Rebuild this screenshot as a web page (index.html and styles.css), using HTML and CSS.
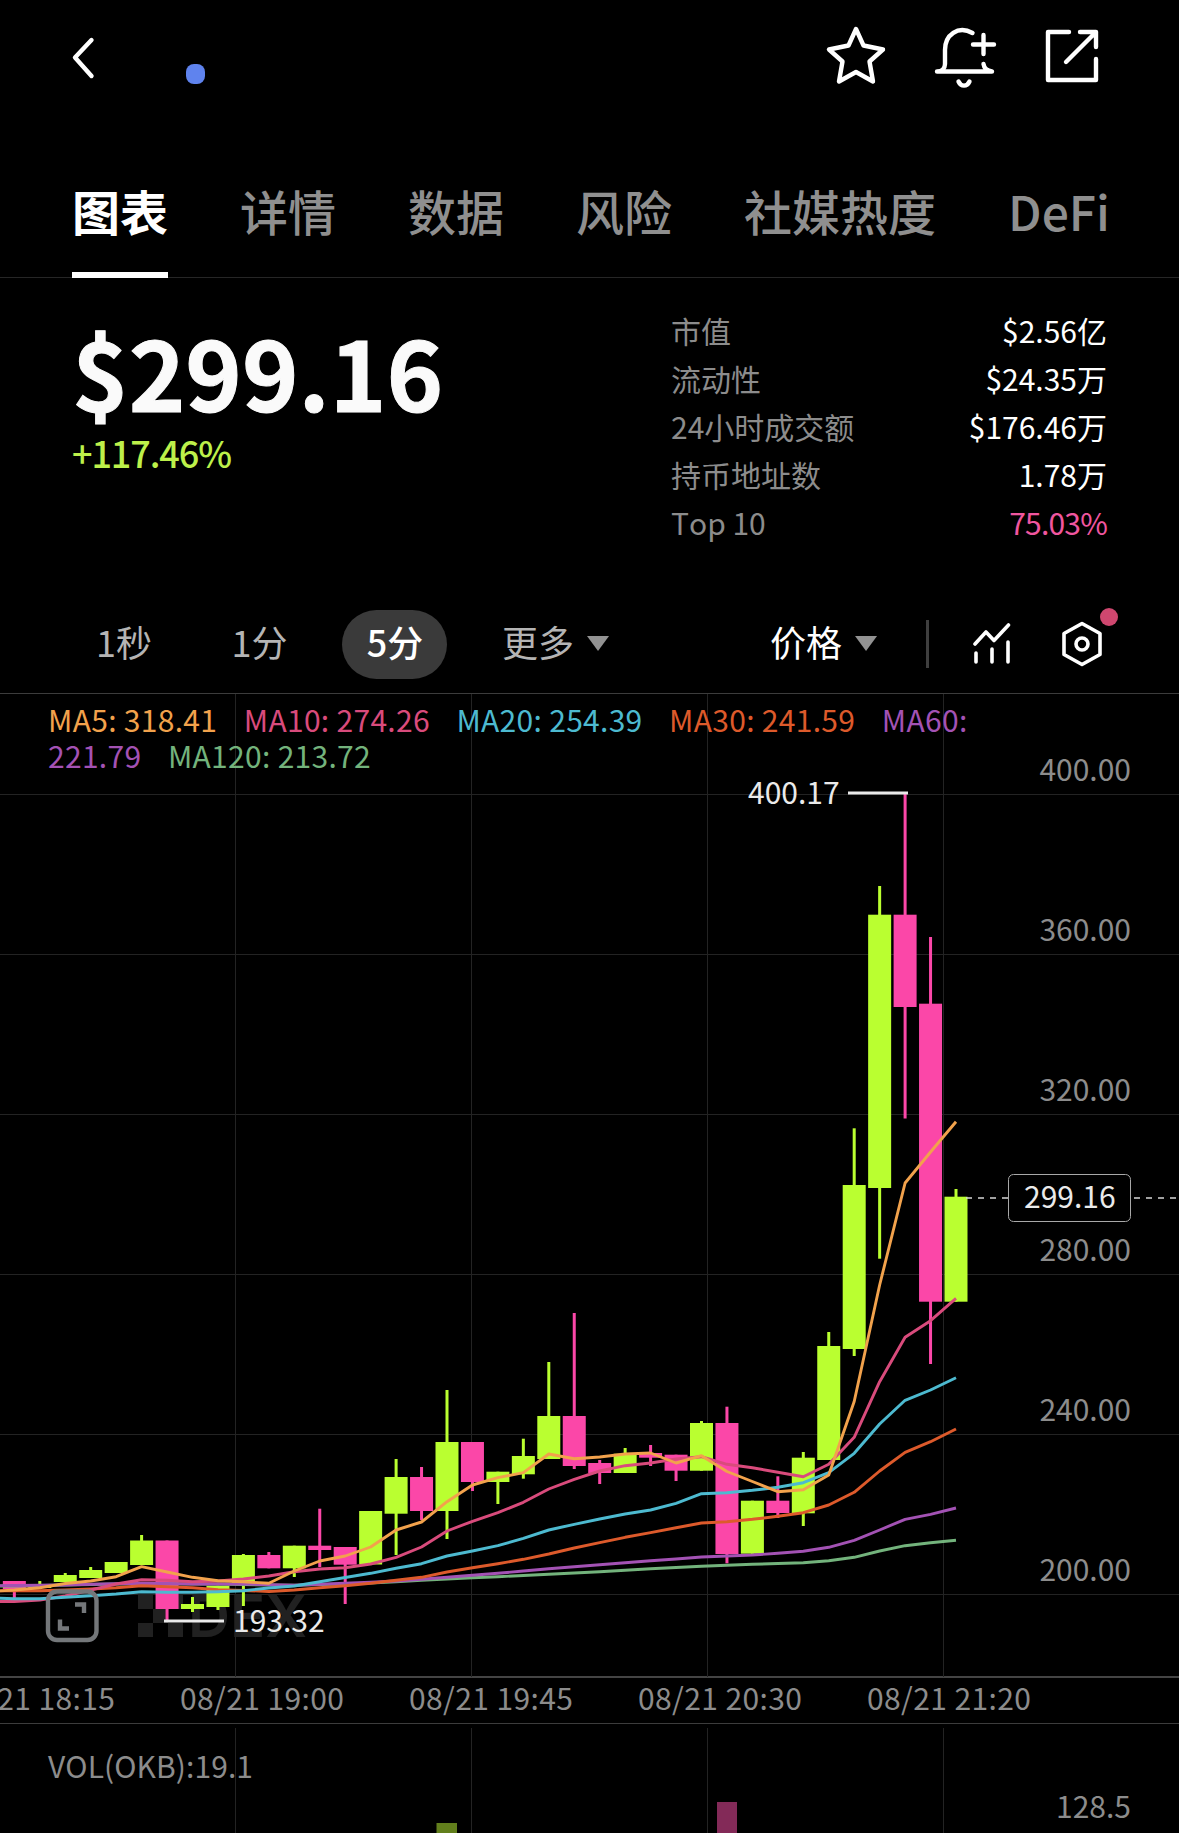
FILE: index.html
```html
<!DOCTYPE html>
<html lang="zh-CN">
<head>
    <meta charset="UTF-8">
    <meta name="viewport" content="width=device-width, initial-scale=1.0">
    <title>OKB</title>
    <link rel="stylesheet" href="styles.css">
</head>
<body>
    <header class="header">
        <svg class="back" width="26" height="44" viewBox="0 0 26 44"><path d="M20.500 4 L4 21.500 L20.500 40"/></svg>
        <span class="token-dot"></span>
        <div class="header-actions">
            <svg class="star" width="62" height="62" viewBox="0 0 62 62"><path d="M31 5 L38.500 21.500 L58 25.500 L44.500 37.500 L48 57.500 L31 48 L14 57.500 L17.500 37.500 L4 25.500 L23.500 21.500 Z"/></svg>
            <svg width="66" height="66" viewBox="0 0 66 66"><path d="M39.500 9 C25 1 12 11 12 26 V40 C12 44 9 47.500 4 47.500 H59 C53 46.500 51 44 50.500 40 M50.500 11 V30 M40 20.500 H61 M25.500 57.500 C28 63 34 63 36.500 57.500"/></svg>
            <svg width="58" height="58" viewBox="0 0 58 58"><path d="M26 5 H5 V53 H53 V32 M37 5 H53 V20 M53 5 L23 35"/></svg>
        </div>
    </header>

    <nav class="tabs">
        <div class="tab active">图表</div>
        <div class="tab">详情</div>
        <div class="tab">数据</div>
        <div class="tab">风险</div>
        <div class="tab">社媒热度</div>
        <div class="tab">DeFi</div>
    </nav>

    <section class="overview">
        <div>
            <div class="price">$299.16</div>
            <div class="change">+117.46%</div>
        </div>
        <div class="stats">
            <div class="stat"><span>市值</span><b>$2.56亿</b></div>
            <div class="stat"><span>流动性</span><b>$24.35万</b></div>
            <div class="stat"><span>24小时成交额</span><b>$176.46万</b></div>
            <div class="stat"><span>持币地址数</span><b>1.78万</b></div>
            <div class="stat"><span>Top 10</span><b class="risk">75.03%</b></div>
        </div>
    </section>

    <div class="toolbar">
        <div class="interval">1秒</div>
        <div class="interval">1分</div>
        <div class="interval active">5分</div>
        <div class="dropdown more">更多<i class="caret"></i></div>
        <div class="dropdown type">价格<i class="caret"></i></div>
        <span class="divider"></span>
        <svg class="tool-icon" width="40" height="44" viewBox="0 0 40 44"><path d="M4 22 L15 10 L23 18.500 L37.500 3 M5 31 V40 M21 27 V40 M37 20 V40"/></svg>
        <div class="settings">
            <svg class="tool-icon" width="44" height="48" viewBox="0 0 44 48"><path d="M22 3.500 L40 13.500 V34.500 L22 44.500 L4 34.500 V13.500 Z"/><circle cx="22" cy="24" r="6"/></svg>
            <span class="badge"></span>
        </div>
    </div>

    <div class="chart">
        <div class="legend">
            <span class="ma5">MA5: 318.41</span>
            <span class="ma10">MA10: 274.26</span>
            <span class="ma20">MA20: 254.39</span>
            <span class="ma30">MA30: 241.59</span>
            <span class="ma60">MA60: 221.79</span>
            <span class="ma120">MA120: 213.72</span>
        </div>
        <svg width="1179" height="983" viewBox="0 694 1179 983">
            <g id="grid" class="grid"></g>
            <g class="watermark">
                <path d="M138 1595h15v14h-15z M168 1595h15v14h-15z M153 1609h15v14h-15z M138 1623h15v14h-15z M168 1623h15v14h-15z"/>
                <text x="188" y="1637" textLength="119" lengthAdjust="spacingAndGlyphs">DEX</text>
            </g>
            <g id="candles"></g>
            <g id="lines" class="lines"></g>
            <g id="scale" class="scale"></g>
            <g class="marker">
                <path d="M848 793 H908 M164 1621 H224"/>
                <text x="748" y="804">400.17</text>
                <text x="233" y="1632">193.32</text>
            </g>
            <g class="last">
                <path d="M966 1198 H1179"/>
                <rect x="1008.500" y="1174.500" width="122" height="47" rx="5"/>
                <text x="1024" y="1208">299.16</text>
            </g>
            <g class="expand">
                <rect x="48" y="1591.500" width="48.500" height="48.500" rx="9"/>
                <path d="M75 1604.500 H84 V1613 M60 1619.500 V1628.500 H69"/>
            </g>
        </svg>
    </div>

    <div class="time-axis">
        <span>08/21 18:15</span>
        <span>08/21 19:00</span>
        <span>08/21 19:45</span>
        <span>08/21 20:30</span>
        <span>08/21 21:20</span>
    </div>

    <div class="volume">
        <svg width="1179" height="109" viewBox="0 1724 1179 109">
            <path class="grid" d="M235.500 1728 V1833 M471.500 1728 V1833 M707.500 1728 V1833 M943.500 1728 V1833"/>
            <rect class="vol-up" x="436.500" y="1823" width="20.500" height="10"/>
            <rect class="vol-down" x="717" y="1802" width="20" height="31"/>
            <g class="scale">
                <text x="48" y="1778" textLength="205">VOL(OKB):19.1</text>
                <text x="1131" y="1818" text-anchor="end">128.5</text>
            </g>
        </svg>
    </div>

    <script src="chart.js"></script>
</body>
</html>
```

FILE: styles.css
```css
body {
    margin: 0;
    width: 1179px;
    height: 1833px;
    overflow: hidden;
    background: #000;
    color: #fff;
    font-family: "Noto Sans CJK SC", sans-serif;
    font-size: 30px;
    font-kerning: none;
}

svg {
    display: block;
    flex: none;
}

.header {
    display: flex;
    height: 172px;
    box-sizing: border-box;
    padding: 0 78px 0 71px;
}

.header path {
    fill: none;
    stroke: #fff;
    stroke-width: 4.4;
    stroke-linecap: round;
    stroke-linejoin: round;
}

.back {
    margin-top: 36px;
}

.token-dot {
    width: 19px;
    height: 20px;
    margin: 64px 0 0 89px;
    border-radius: 8px;
    background: #5f83ee;
}

.header-actions {
    display: flex;
    gap: 44px;
    margin: 24px 0 0 auto;
}

.header-actions .star {
    margin-right: 2px;
}

.header-actions svg + svg + svg {
    margin-top: 3px;
}

.tabs {
    display: flex;
    gap: 72px;
    padding-left: 72px;
    border-bottom: 1px solid #262626;
}

.tab {
    line-height: 72px;
    padding: 2px 0 26px;
    margin-bottom: -1px;
    border-bottom: 6px solid transparent;
    font-size: 48px;
    font-weight: 500;
    color: #8f8f8f;
    white-space: nowrap;
}

.tab.active {
    color: #fff;
    font-weight: 700;
    border-color: #fff;
}

.overview {
    display: flex;
    justify-content: space-between;
    height: 317px;
    box-sizing: border-box;
    padding: 28px 72px 0;
}

.price {
    margin-top: 15px;
    line-height: 100px;
    font-size: 96px;
    font-weight: 700;
    color: #fafafa;
    -webkit-text-stroke: 1px #fafafa;
}

.change {
    margin-top: 11px;
    line-height: 40px;
    font-size: 36px;
    font-weight: 500;
    letter-spacing: -1.1px;
    color: #bdf04a;
}

.stats {
    width: 436px;
}

.stat {
    display: flex;
    justify-content: space-between;
    line-height: 48px;
    color: #8c8c8c;
}

.stat b {
    font-weight: 400;
    color: #fff;
}

.stat .risk {
    color: #f0569f;
    letter-spacing: -0.8px;
}

.toolbar {
    display: flex;
    align-items: center;
    height: 99px;
    box-sizing: border-box;
    padding-left: 71px;
    border-bottom: 1px solid #3c3c3c;
    font-size: 36px;
}

.interval {
    width: 105px;
    height: 69px;
    box-sizing: border-box;
    margin-right: 30.5px;
    padding-left: 1px;
    line-height: 63px;
    text-align: center;
    border-radius: 35px;
    color: #b4b4b4;
}

.interval.active {
    background: #3a3a3a;
    color: #fff;
    font-weight: 500;
}

.dropdown {
    display: flex;
    align-items: center;
    height: 69px;
    line-height: 61px;
    padding-bottom: 6px;
    box-sizing: border-box;
}

.more {
    margin-left: 24.5px;
    color: #b4b4b4;
}

.type {
    margin-left: 161px;
}

.caret {
    width: 22px;
    height: 15px;
    margin: 5px 0 0 13px;
    background: #929292;
    clip-path: polygon(0 0, 100% 0, 50% 100%);
}

.divider {
    width: 3px;
    height: 48px;
    margin: 0 42px 0 49px;
    background: #3f3f3f;
}

.tool-icon path,
.tool-icon circle {
    fill: none;
    stroke: #fff;
    stroke-width: 3.6;
    stroke-linecap: round;
    stroke-linejoin: round;
}

.settings {
    position: relative;
    margin-left: 49px;
}

.badge {
    position: absolute;
    top: -12px;
    right: -14px;
    width: 18px;
    height: 18px;
    border-radius: 50%;
    background: #cf476f;
}

.chart {
    position: relative;
}

.legend {
    position: absolute;
    top: 7px;
    left: 48px;
    width: 960px;
    line-height: 36px;
    letter-spacing: 0.3px;
}

.legend span {
    margin-right: 19.5px;
}

.ma5 { color: #f2a24c; stroke: #f2a24c; }
.ma10 { color: #d94b7c; stroke: #d94b7c; }
.ma20 { color: #4dbad0; stroke: #4dbad0; }
.ma30 { color: #dd5a2b; stroke: #dd5a2b; }
.ma60 { color: #a352b4; stroke: #a352b4; }
.ma120 { color: #73b37c; stroke: #73b37c; }

.grid {
    stroke: #232323;
    stroke-width: 1;
}

.watermark {
    fill: #212121;
    font-family: Inter, sans-serif;
    font-size: 58px;
    font-weight: 600;
}

.up { fill: #baff30; }
.down { fill: #fb47a8; }
.vol-up { fill: #627f1c; }
.vol-down { fill: #832a58; }

.lines polyline {
    fill: none;
    stroke-width: 2.9;
    stroke-linejoin: round;
}

.scale {
    fill: #8c8c8c;
}

.marker,
.last text {
    fill: #eaeaea;
}

.marker path {
    stroke: #eaeaea;
    stroke-width: 3;
}

.last path {
    stroke: #d5d5d5;
    stroke-width: 1.3;
    stroke-dasharray: 6 6;
}

.last rect {
    fill: #000;
    stroke: #a8a8a8;
}

.expand rect,
.expand path {
    fill: none;
    stroke: #74777a;
    stroke-width: 4.4;
}

.time-axis {
    display: flex;
    gap: 66px;
    height: 48px;
    box-sizing: border-box;
    margin-top: -1px;
    border-top: 2px solid #444;
    border-bottom: 1px solid #3c3c3c;
    line-height: 39px;
    color: #8c8c8c;
}

.time-axis span {
    width: 163px;
    flex: none;
    white-space: nowrap;
    letter-spacing: 0.4px;
}

.time-axis span:first-child {
    margin-left: -49px;
}
```

FILE: chart.js
```js
const LAST_X = 956;
const STEP = 25.45;
const BODY = 23;

// newest first: [direction, high, top, bottom, low]
const candles = [
    ['up', 1189, 1196.7, 1301.7, 1301.7],
    ['down', 937, 1003.7, 1301.7, 1364],
    ['down', 793, 914.7, 1007, 1118.5],
    ['up', 886, 914.7, 1188, 1258.7],
    ['up', 1128.3, 1185, 1349, 1356],
    ['up', 1332, 1346, 1460, 1460],
    ['up', 1452, 1457.7, 1513.3, 1526],
    ['down', 1476.3, 1500.7, 1513, 1518],
    ['up', 1500.7, 1500.7, 1553.7, 1553.7],
    ['down', 1406.7, 1423, 1554, 1563.3],
    ['up', 1421, 1423, 1470.7, 1470.7],
    ['down', 1454.7, 1454.7, 1470.7, 1481],
    ['down', 1445, 1453, 1457.7, 1466],
    ['up', 1448, 1453.7, 1473, 1473],
    ['down', 1460, 1463, 1473, 1484],
    ['down', 1313, 1416, 1466, 1469],
    ['up', 1362, 1416, 1459, 1459],
    ['up', 1438.7, 1456, 1474.3, 1478.7],
    ['up', 1471.7, 1471.7, 1482, 1504],
    ['down', 1442, 1442, 1482, 1491],
    ['up', 1390, 1442, 1511, 1539],
    ['down', 1467, 1477, 1511, 1520],
    ['up', 1459, 1477, 1513.7, 1555],
    ['up', 1511, 1511, 1564.5, 1564.5],
    ['down', 1547, 1547, 1564.7, 1604],
    ['down', 1508.7, 1545.7, 1550, 1567],
    ['up', 1545.7, 1545.7, 1568.3, 1577],
    ['down', 1552, 1555, 1568.3, 1568.3],
    ['up', 1554, 1555, 1585, 1606],
    ['up', 1585.7, 1585.7, 1607, 1610],
    ['up', 1597, 1604, 1609, 1612],
    ['down', 1540.5, 1540.5, 1609, 1620],
    ['up', 1535, 1540.5, 1565, 1565],
    ['up', 1562, 1562, 1573, 1573],
    ['up', 1567, 1570, 1578, 1578],
    ['up', 1573, 1575, 1582, 1582],
    ['up', 1581, 1585, 1588, 1588],
    ['down', 1581, 1581, 1589, 1598]
];

const averages = {
    ma120: [1540.3, 1542.7, 1545.7, 1551, 1557.3, 1560.7, 1562.7, 1563.5, 1564.3, 1565.3, 1566.3, 1567.5, 1568.7, 1570.2, 1571.7, 1573, 1574.3, 1575.5, 1576.7, 1577.8, 1579, 1580.3, 1581.7, 1583, 1584, 1584.6, 1585.3, 1585, 1584.5, 1584, 1584, 1583.7, 1583.7, 1584, 1584.5, 1585, 1585.5, 1586, 1586],
    ma60: [1508, 1514.3, 1519.3, 1530, 1540.3, 1547.3, 1551.3, 1553.3, 1555, 1556, 1557, 1559, 1560.7, 1562.7, 1564.7, 1566.7, 1568.7, 1571, 1573.3, 1575.3, 1577.3, 1579.2, 1581, 1582.2, 1583.3, 1584.3, 1585.3, 1584.7, 1584, 1584, 1584, 1583.5, 1583.3, 1583.8, 1584.3, 1585, 1585.3, 1585.5, 1585.7],
    ma30: [1429, 1441.7, 1452.3, 1471, 1492.3, 1505, 1512.7, 1516.3, 1519.3, 1521.7, 1523, 1527.7, 1532.7, 1537.3, 1542.7, 1548, 1554, 1559.3, 1563.7, 1567.7, 1572, 1577.3, 1580.3, 1583.3, 1585.7, 1587.7, 1590, 1591.5, 1590.5, 1589.7, 1587.7, 1586.7, 1585.7, 1587.7, 1589, 1590, 1590.7, 1590.7, 1591],
    ma10: [1298.3, 1320.7, 1337.3, 1381.7, 1437.3, 1464.3, 1476.7, 1472.3, 1467.7, 1464.3, 1456.7, 1459, 1463, 1465.7, 1471, 1479.3, 1489, 1502.3, 1512.7, 1521.3, 1531, 1547, 1557.3, 1564, 1567.7, 1569, 1571.7, 1576, 1579, 1581, 1581.7, 1580.3, 1579.7, 1584, 1590, 1596, 1600, 1601.5, 1601.5],
    ma20: [1377.7, 1390, 1400.3, 1424, 1453.3, 1472.7, 1482.7, 1487.3, 1490.3, 1492.7, 1493.7, 1503.3, 1510, 1514, 1519, 1524.3, 1530, 1538.3, 1545.7, 1551, 1556, 1563.7, 1568.3, 1573.3, 1577.5, 1581.7, 1586, 1588, 1590.7, 1591.7, 1592.3, 1592.3, 1591.7, 1594, 1595.7, 1597.3, 1598.7, 1598.7, 1598],
    ma5: [1121.7, 1152, 1183, 1285, 1401.5, 1475, 1489.7, 1491.7, 1481.5, 1471.5, 1455.7, 1463, 1453, 1454, 1457, 1458.7, 1454, 1472.7, 1477.7, 1485, 1501.7, 1522, 1530, 1547, 1556, 1561, 1571, 1583.3, 1581.7, 1580.7, 1577.3, 1572, 1566.7, 1576.7, 1581, 1583.5, 1587.7, 1590, 1591.5]
};

const xAt = i => LAST_X - i * STEP;

let grid = '';
let scale = '';
for (let i = 0; i < 6; i++) {
    const y = 794.5 + i * 160;
    grid += `<path d="M0 ${y} H1179"/>`;
    scale += `<text x="1131" y="${y - 13.5}" text-anchor="end">${400 - i * 40}.00</text>`;
}
for (let i = 0; i < 4; i++) {
    grid += `<path d="M${235.5 + i * 236} 694 V1677"/>`;
}
document.getElementById('grid').innerHTML = grid;
document.getElementById('scale').innerHTML = scale;

document.getElementById('candles').innerHTML = candles.map(([dir, high, top, bottom, low], i) => `
    <g class="${dir}">
        <rect x="${xAt(i) - 1.5}" y="${high}" width="3" height="${low - high}"/>
        <rect x="${xAt(i) - BODY / 2}" y="${top}" width="${BODY}" height="${bottom - top}"/>
    </g>`).join('');

document.getElementById('lines').innerHTML = Object.entries(averages).map(([name, values]) =>
    `<polyline class="${name}" points="${values.map((y, i) => xAt(i) + ',' + y).join(' ')}"/>`).join('');
```
